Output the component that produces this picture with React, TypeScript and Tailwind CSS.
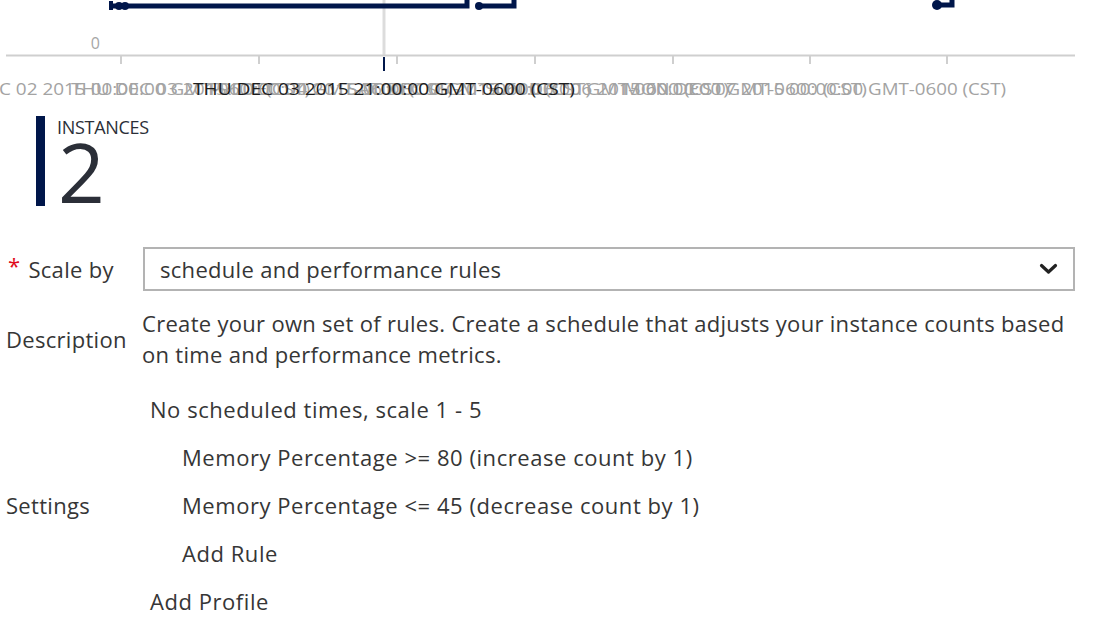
const navy = "#00164a";

const ticks = [121, 259, 397, 535, 673, 810, 947];

const axisLabels = [
  { x: 119, t: "WED DEC 02 2015 00:00:00 GMT-0600 (CST)" },
  { x: 262, t: "THU DEC 03 2015 00:00:00 GMT-0600 (CST)" },
  { x: 400, t: "FRI DEC 04 2015 00:00:00 GMT-0600 (CST)" },
  { x: 538, t: "SAT DEC 05 2015 00:00:00 GMT-0600 (CST)" },
  { x: 676, t: "SUN DEC 06 2015 00:00:00 GMT-0600 (CST)" },
  { x: 815, t: "MON DEC 07 2015 00:00:00 GMT-0600 (CST)" },
];

const rules = [
  { text: "No scheduled times, scale 1 - 5", indent: "pl-[8px]" },
  { text: "Memory Percentage >= 80 (increase count by 1)", indent: "pl-[40px]" },
  { text: "Memory Percentage <= 45 (decrease count by 1)", indent: "pl-[40px]" },
  { text: "Add Rule", indent: "pl-[40px]" },
  { text: "Add Profile", indent: "pl-[8px]" },
];

function Chart() {
  return (
    <svg width={1098} height={100} className="block" style={{ fontFamily: "'Open Sans', sans-serif" }}>
      {/* hover cursor */}
      <line x1={384} y1={0} x2={384} y2={55} stroke="#dcdcdc" strokeWidth={3} />

      {/* step series */}
      <g stroke={navy} strokeWidth={5} fill="none">
        <path d="M110 6 H467 V-4" />
        <path d="M479 6 H514 V-4" />
        <path d="M937 5 H952 V-4" />
      </g>
      <g fill={navy}>
        <rect x={109} y={1} width={4} height={9} />
        <circle cx={119} cy={6} r={4} />
        <circle cx={125} cy={6} r={4} />
        <circle cx={479} cy={6} r={4} />
        <circle cx={937} cy={5} r={5} />
      </g>

      {/* axis */}
      <text x={100} y={49} textAnchor="end" fontSize={16} fill="#a6a6a6">
        0
      </text>
      <line x1={6} y1={55.5} x2={1075} y2={55.5} stroke="#cfcfcf" strokeWidth={2} />
      {ticks.map((x) => (
        <line key={x} x1={x} y1={56} x2={x} y2={64} stroke="#cfcfcf" strokeWidth={2} />
      ))}
      <line x1={384} y1={57} x2={384} y2={71} stroke={navy} strokeWidth={2} />

      {axisLabels.map((l) => (
        <text
          key={l.t}
          x={l.x}
          y={95}
          textAnchor="middle"
          fontSize={17}
          fill="#a3a3a3"
          textLength={382}
          lengthAdjust="spacingAndGlyphs"
        >
          {l.t}
        </text>
      ))}
      <text
        x={384}
        y={95}
        textAnchor="middle"
        fontSize={17}
        fill="#1e1e1e"
        textLength={382}
        lengthAdjust="spacingAndGlyphs"
      >
        THU DEC 03 2015 21:00:00 GMT-0600 (CST)
      </text>
    </svg>
  );
}

function Chevron() {
  return (
    <svg width="19" height="12" viewBox="0 0 19 12" fill="none">
      <path d="M2.5 2.5 L9.5 9 L16.5 2.5" stroke="#222" strokeWidth="3.2" strokeLinecap="round" strokeLinejoin="round" />
    </svg>
  );
}

export default function App() {
  return (
    <div
      className="w-[1098px] h-[620px] overflow-hidden bg-white text-[#363636]"
      style={{ fontFamily: "'Open Sans', 'Noto Sans', sans-serif" }}
    >
      <Chart />

      <div className="flex pl-[36px] mt-[16px]">
        <div className="w-[9px] h-[90px] bg-[#00164a]" />
        <div className="ml-[12px] flex flex-col">
          <div className="text-[18px] leading-[20px] tracking-[-0.3px] text-[#2b2f38] mt-[1px]">INSTANCES</div>
          <div className="text-[82px] leading-[68px] font-normal text-[#2b2f38] ml-[1px]">2</div>
        </div>
      </div>

      <div className="mt-[41px] pl-[6px] pr-[23px] grid grid-cols-[136px_1fr] text-[22px] tracking-[0.3px]">
        <div className="flex items-center">
          <span className="text-[#e00b1c] text-[22px] leading-none ml-[2px] mt-[-8px]">*</span>
          <span className="ml-[8px]">Scale by</span>
        </div>
        <div className="h-[44px] border-2 border-[#b3b3b3] flex items-center justify-between pl-[15px] pr-[15px] ml-[1px]">
          <span>schedule and performance rules</span>
          <Chevron />
        </div>

        <div className="flex items-center mt-[17px]">Description</div>
        <div className="mt-[17px] leading-[31px] whitespace-nowrap">
          Create your own set of rules. Create a schedule that adjusts your instance counts based
          <br />
          on time and performance metrics.
        </div>

        <div className="flex items-center mt-[15px]">Settings</div>
        <div className="mt-[15px] flex flex-col tracking-[0.55px]">
          {rules.map((r) => (
            <div key={r.text} className={`h-[48px] flex items-center ${r.indent}`}>
              {r.text}
            </div>
          ))}
        </div>
      </div>
    </div>
  );
}
